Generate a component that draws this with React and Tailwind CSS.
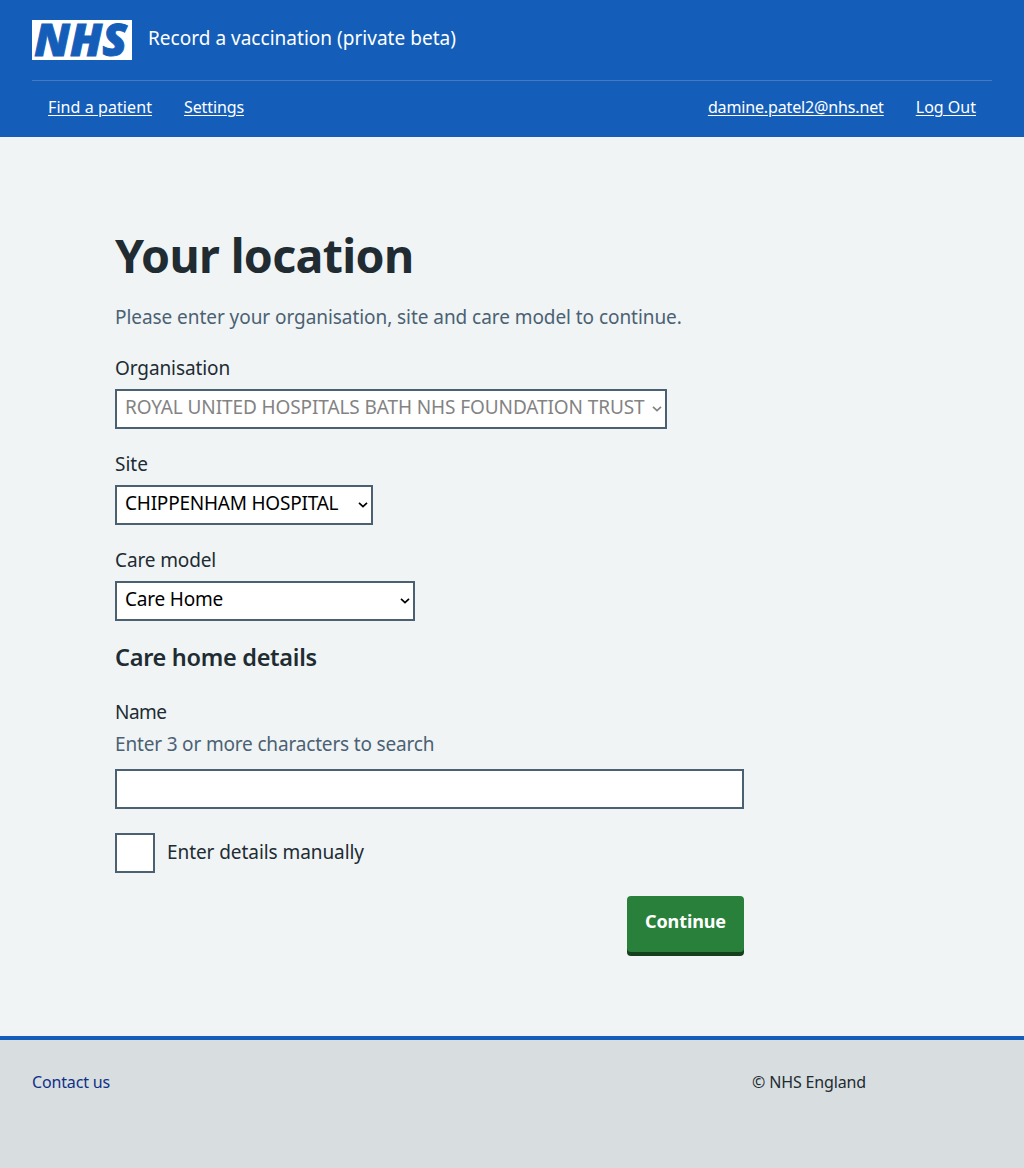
import React from 'react';

function Logo() {
  return (
    <svg width="100" height="40" viewBox="0 0 40 16" role="img" aria-label="NHS" className="block shrink-0 overflow-visible bg-white">
      <text
        x="0.9"
        y="14.3"
        fontSize="17.6"
        textLength="37.1"
        lengthAdjust="spacingAndGlyphs"
        fontFamily="Open Sans"
        fontWeight="800"
        fontStyle="italic"
        fill="#145eb9"
        stroke="#145eb9"
        strokeWidth="0.35"
      >
        NHS
      </text>
    </svg>
  );
}

function NavLink({ children, className = '' }) {
  return (
    <a href="#" className={`underline decoration-1 underline-offset-2 ${className}`}>
      {children}
    </a>
  );
}

function Label({ children, className = '' }) {
  return <label className={`block pt-px leading-[27px] text-[#212b32] ${className}`}>{children}</label>;
}

function Select({ children, className }) {
  return (
    <button
      type="button"
      className={`mt-[7px] flex h-10 items-center justify-between border-2 border-[#4b6173] bg-white pr-[3px] pl-2 ${className}`}
    >
      <span className="-mt-1 whitespace-nowrap leading-7">{children}</span>
      <svg width="10" height="6" viewBox="0 0 10 6" fill="none" stroke="currentColor" strokeWidth="1.7" className="shrink-0">
        <path d="M1 0.8 5 4.6 9 0.8" />
      </svg>
    </button>
  );
}

export default function App() {
  return (
    <div className="flex min-h-[1168px] flex-col bg-[#f0f4f5] font-['Noto_Sans','Open_Sans',sans-serif] text-[19px] text-[#212b32]">
      <header className="h-[137px] bg-[#145eb9] px-8 pt-5 text-white">
        <div className="flex h-[60px] items-start gap-4">
          <Logo />
          <span className="mt-1 leading-7 tracking-[0.02px]">Record a vaccination (private beta)</span>
        </div>
        <nav className="flex justify-between border-t border-[#4379c5] px-4 pt-[14px] text-base leading-6">
          <div className="flex gap-8">
            <NavLink className="tracking-[0.08px]">Find a patient</NavLink>
            <NavLink className="tracking-[-0.11px]">Settings</NavLink>
          </div>
          <div className="flex gap-8">
            <NavLink className="tracking-[-0.14px]">damine.patel2@nhs.net</NavLink>
            <NavLink>Log Out</NavLink>
          </div>
        </nav>
      </header>

      <main className="ml-[115px] w-[629px] pt-[90px] pb-20">
        <h1 className="text-[46.5px] leading-[56px] font-bold tracking-[-0.66px]">Your location</h1>
        <p className="mt-5 leading-7 tracking-[-0.06px] text-[#4b6173]">
          Please enter your organisation, site and care model to continue.
        </p>

        <Label className="mt-[23px] tracking-[-0.1px]">Organisation</Label>
        <Select className="w-[552px] tracking-[-0.1px] text-[#838383]">ROYAL UNITED HOSPITALS BATH NHS FOUNDATION TRUST</Select>

        <Label className="mt-[21px]">Site</Label>
        <Select className="w-[258px] tracking-[-0.22px] text-black">CHIPPENHAM HOSPITAL</Select>

        <Label className="mt-[21px] tracking-[-0.13px]">Care model</Label>
        <Select className="w-[300px] tracking-[-0.2px] text-black">Care Home</Select>

        <h2 className="mt-5 text-[23.5px] leading-8 font-semibold tracking-[-0.3px]">Care home details</h2>

        <Label className="mt-[25px] tracking-[-0.5px]">Name</Label>
        <p className="mt-1 pt-px leading-[27px] tracking-[-0.17px] text-[#4b6173]">Enter 3 or more characters to search</p>
        <input type="text" className="mt-[11px] block h-10 w-full border-2 border-[#4b6173] bg-white px-2" />

        <div className="mt-6 flex items-center gap-3">
          <span role="checkbox" aria-checked="false" className="size-10 border-2 border-[#4b6173] bg-white" />
          <Label className="-mt-[2px] tracking-[-0.07px]">Enter details manually</Label>
        </div>

        <div className="mt-[23px] flex justify-end pb-1">
          <button
            type="button"
            className="flex h-14 w-[117px] justify-center rounded-[4px] bg-[#28803b] pt-[11px] text-[18px] leading-7 font-bold tracking-[-0.1px] text-white shadow-[0_4px_0_#153f1d]"
          >
            Continue
          </button>
        </div>
      </main>

      <footer className="flex flex-1 border-t-4 border-[#145eb9] bg-[#d8dddf] px-8 pt-[30px] text-base leading-6">
        <a href="#" className="w-[720px] tracking-[-0.16px] text-[#0f3089]">Contact us</a>
        <p className="tracking-[-0.15px]">© NHS England</p>
      </footer>
    </div>
  );
}
